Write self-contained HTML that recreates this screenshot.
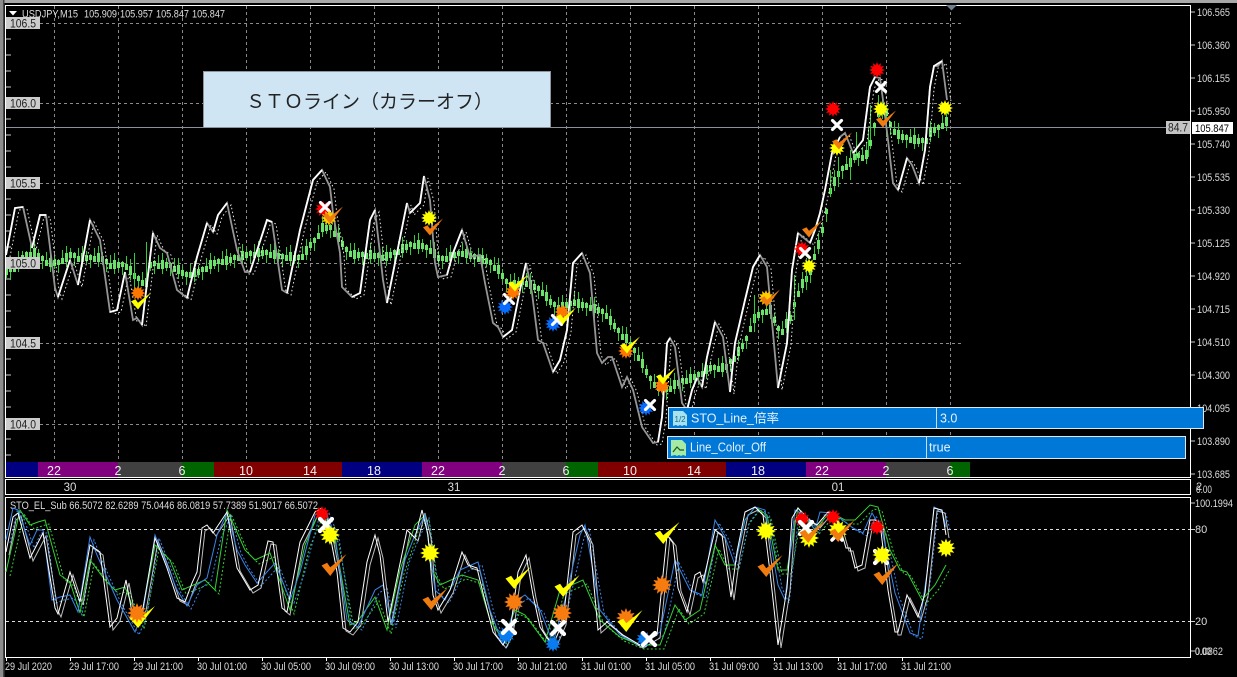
<!DOCTYPE html>
<html lang="ja">
<head>
<meta charset="utf-8">
<title>USDJPY,M15</title>
<style>
html,body{margin:0;padding:0;background:#000;width:1237px;height:677px;overflow:hidden}
svg{display:block}
text{font-family:"Liberation Sans","Noto Sans CJK JP",sans-serif;font-size:11px;fill:#dcdcdc}
.lb{fill:#222;font-size:11.5px}
.bar{fill:#f0f0f0;font-size:12.500px;text-anchor:middle}
.row{fill:#e6f1fa;font-size:12.500px}
marker{overflow:visible}
</style>
</head>
<body>
<svg width="1237" height="677" viewBox="0 0 1237 677" xmlns="http://www.w3.org/2000/svg">
<defs>
<marker id="k1" markerUnits="userSpaceOnUse" markerWidth="1" markerHeight="1" orient="0" overflow="visible"><path d="M.5 -7V6" stroke="#2fcf2f"/><rect x="-1" y="-3" width="3" height="6" fill="#6ce26c"/></marker>
<marker id="k2" markerUnits="userSpaceOnUse" markerWidth="1" markerHeight="1" orient="0" overflow="visible"><path d="M.5 -4V10" stroke="#2fcf2f"/><rect x="-1" y="-3" width="3" height="5" fill="#6ce26c"/></marker>
<marker id="k3" markerUnits="userSpaceOnUse" markerWidth="1" markerHeight="1" orient="0" overflow="visible"><path d="M.5 -10V4" stroke="#2fcf2f"/><rect x="-1" y="-2" width="3" height="6" fill="#6ce26c"/></marker>
<marker id="k4" markerUnits="userSpaceOnUse" markerWidth="1" markerHeight="1" orient="0" overflow="visible"><path d="M.5 -12V9" stroke="#2fcf2f"/><rect x="-1" y="-5" width="3" height="9" fill="#6ce26c"/></marker>
<polygon id="s" points="1,0 .6,.16 .866,.5 .438,.438 .5,.866 .16,.6 0,1 -.16,.6 -.5,.866 -.438,.438 -.866,.5 -.6,.16 -1,0 -.6,-.16 -.866,-.5 -.438,-.438 -.5,-.866 -.16,-.6 0,-1 .16,-.6 .5,-.866 .438,-.438 .866,-.5 .6,-.16"/>
<polygon id="c" points="-1,.05 -.55,-.2 -.3,.2 1,-1 -.3,1"/>
<path id="x" d="M-1 -1L1 1M-1 1L1 -1" fill="none" stroke="#fff" stroke-width=".7" stroke-linecap="round"/>
<polyline id="m" fill="none" points="6,255 15,208 23,207 32,248 40,215 46,215 55,288 58,297 70,260 78,285 90,220 100,240 110,312 117,310 125,272 133,320 137,318 142,325 153,233 160,248 167,253 177,290 187,298 197,257 207,223 213,232 218,215 227,203 237,250 245,272 250,272 267,220 272,222 282,290 287,293 300,230 313,180 322,170 330,187 333,213 340,253 342,287 352,297 360,293 370,220 375,210 383,280 387,303 397,253 407,203 410,213 420,203 424,176 430,200 435,263 438,277 447,275 453,253 462,230 465,240 470,257 480,255 485,283 493,323 498,327 503,337 512,330 520,290 526,263 532,293 538,340 543,343 553,372 560,360 567,330 573,263 582,253 590,273 597,353 602,363 608,357 612,357 622,387 627,377 633,390 642,427 653,443 658,442 662,417 667,343 670,338 675,347 682,403 687,410 692,390 697,378 702,387 707,357 715,322 723,337 730,392 735,343 745,300 753,267 760,255 767,267 773,333 778,388 787,343 792,270 798,233 810,243 815,230 820,213 825,190 832,153 840,137 845,133 853,153 863,140 870,87 875,77 880,78 883,100 888,140 893,183 898,190 907,158 912,165 919,183 925,150 930,87 934,66 938,66 942,61 947,100"/>
<polyline id="sw" fill="none" points="6,552 13,517 18,513 30,558 43,533 55,608 58,614 70,572 80,602 90,545 100,552 110,627 117,618 126,580 133,618 143,608 155,538 160,550 167,568 177,598 185,602 192,583 197,572 202,528 207,525 213,533 227,512 237,568 250,590 258,585 268,541 273,542 282,608 287,612 300,542 315,512 322,508 330,535 337,572 343,628 350,632 358,622 367,562 375,535 380,555 388,622 397,578 407,530 415,538 422,510 428,535 433,595 438,610 450,590 462,552 468,565 477,568 483,593 493,632 503,645 510,632 518,572 526,555 533,595 540,627 547,638 553,645 563,622 573,532 582,525 590,542 598,630 607,622 623,635 640,645 657,635 667,535 673,543 678,588 687,612 695,575 700,572 703,582 715,530 722,535 731,597 737,552 745,512 755,507 763,515 770,572 778,645 787,588 792,518 798,508 807,518 817,525 828,512 833,513 840,527 846,548 850,548 855,568 862,565 870,520 875,520 880,523 888,590 895,632 898,632 907,595 918,617 925,593 934,508 942,510 946,535"/>
<polyline id="sb" fill="none" points="6,540 13,508 18,510 30,545 37,530 43,530 52,600 60,597 70,595 78,612 90,537 97,555 117,600 135,632 143,612 155,535 165,560 177,590 187,606 197,585 207,578 217,535 227,513 237,550 245,565 257,583 275,563 290,600 300,572 315,515 325,510 335,535 347,620 358,627 375,590 383,585 392,625 405,560 415,535 425,515 435,590 445,600 460,570 478,562 490,610 503,645 517,600 525,595 540,610 553,643 565,600 580,535 585,525 600,610 620,635 640,645 660,632 675,560 690,590 702,595 715,520 725,537 735,565 745,520 755,507 765,510 778,585 785,600 795,510 805,515 815,530 820,512 833,513 853,528 863,533 872,513 882,530 895,593 910,633 918,636 927,573 934,507 942,511 946,527"/>
<polyline id="sg" fill="none" points="6,572 20,510 30,525 38,522 45,520 60,575 70,582 80,613 90,560 105,580 115,590 125,587 140,625 155,545 170,560 182,590 205,580 215,590 227,510 245,550 255,560 270,553 290,610 305,545 320,510 335,540 350,625 357,622 375,597 387,630 400,570 415,525 425,515 432,570 440,585 462,575 478,580 490,620 503,640 515,610 525,615 545,642 560,590 583,580 600,620 620,637 640,645 660,645 675,605 685,620 700,610 715,545 725,565 735,565 745,520 755,507 767,515 778,570 787,570 798,508 815,530 830,512 845,520 855,520 870,505 878,507 890,550 900,570 907,572 922,600 935,585 946,565"/>
</defs>

<rect width="1237" height="677" fill="#000"/>
<!-- outer window edges -->
<rect x="0" y="0" width="1237" height="3" fill="#a8a8a8"/>
<rect x="0" y="0" width="3" height="677" fill="#8c8c8c"/>
<rect x="3" y="0" width="1.5" height="677" fill="#444"/>

<!-- main grid -->
<g stroke="#8a8a8a" stroke-dasharray="3 3" fill="none">
<path d="M54.5 6V462M118.5 6V462M182.5 6V462M246.5 6V462M310.5 6V462M374.5 6V462M438.5 6V462M502.5 6V462M566.5 6V462M630.5 6V462M694.5 6V462M758.5 6V462M822.5 6V462M886.5 6V462M950.5 6V462"/>
<path d="M40 23.5H963M40 103.5H963M40 183.5H963M40 263.5H963M40 343.5H963M40 424.5H963"/>
</g>
<path d="M6 39h5M6 55h5M6 71h5M6 87h5M6 119h5M6 135h5M6 151h5M6 167h5M6 199h5M6 215h5M6 231h5M6 247h5M6 279h5M6 295h5M6 311h5M6 327h5M6 359h5M6 375h5M6 391h5M6 407h5M6 439h5M6 455h5M6 471h5" stroke="#ccc" fill="none"/>
<path d="M5 127.5H1190" stroke="#8a909c" stroke-width="1" fill="none"/>

<!-- candles -->
<g fill="none" stroke="none">
<polyline marker-start="url(#k1)" marker-mid="url(#k1)" marker-end="url(#k1)" points="6,272 22,258 38,256 54,263 70,255 86,258 102,259 118,265 134,276 150,265 166,265 182,273 198,272 214,263 230,260 246,255 262,253 278,256 294,258 310,245 326,228 342,244 358,255 374,256 390,255 406,247 422,246 438,258 454,255 470,256 486,261 502,276 518,284 534,287 550,302 566,305 582,305 598,310 614,326 630,345 646,372 662,389 678,383 694,377 710,368 726,367 742,346 758,315 774,320 790,318 806,279 822,230 838,174 854,157 870,143 886,113 902,137 918,141 934,130"/>
<polyline marker-start="url(#k2)" marker-mid="url(#k2)" marker-end="url(#k2)" points="10,270 26,255 42,259 58,263 74,256 90,258 106,262 122,265 138,279 154,264 170,266 186,275 202,270 218,262 234,258 250,254 266,253 282,257 298,258 314,241 330,228 346,250 362,255 378,256 394,253 410,245 426,248 442,259 458,254 474,257 490,263 506,282 522,283 538,289 554,305 570,304 586,306 602,312 618,331 634,351 650,379 666,390 682,381 698,375 714,368 730,362 746,339 762,313 778,329 794,305 810,273 826,212 842,169 858,156 874,126 890,125 906,138 922,141 938,128"/>
<polyline marker-start="url(#k3)" marker-mid="url(#k3)" marker-end="url(#k3)" points="14,268 30,254 46,262 62,260 78,258 94,258 110,265 126,266 142,282 158,265 174,268 190,274 206,268 222,261 238,257 254,254 270,254 286,257 302,256 318,235 334,233 350,253 366,255 382,257 398,251 414,245 430,250 446,258 462,253 478,258 494,267 510,284 526,283 542,292 558,307 574,302 590,307 606,315 622,336 638,357 654,384 670,388 686,380 702,373 718,368 734,358 750,328 766,311 782,331 798,293 814,256 830,190 846,166 862,157 878,113 894,131 910,139 926,140 942,125"/>
<polyline marker-start="url(#k4)" marker-mid="url(#k4)" marker-end="url(#k4)" points="18,263 34,253 50,263 66,258 82,258 98,258 114,265 130,271 146,283 162,265 178,270 194,273 210,265 226,261 242,256 258,253 274,255 290,257 306,251 322,228 338,238 354,255 370,255 386,257 402,249 418,245 434,254 450,257 466,254 482,260 498,270 514,285 530,285 546,297 562,307 578,304 594,309 610,321 626,339 642,364 658,387 674,385 690,379 706,370 722,368 738,352 754,319 770,310 786,324 802,284 818,245 834,182 850,163 866,155 882,110 898,135 914,140 930,133 946,122"/>
</g>
<path d="M134.500 253V290M146.500 242V285M830.500 170V197M838.500 157V187M850.500 150V180M856.500 132V160M868.500 127V157M870.500 105V140M878.500 95V118M886.500 117V137M794.500 275V320M806.500 258V290M754.500 295V332" stroke="#2fcf2f" fill="none"/>

<!-- STO line -->
<use href="#m" stroke="#e8e8e8" stroke-width="1" stroke-dasharray="1.500 2.500" transform="translate(4,2)"/>
<use href="#m" stroke="#959595" stroke-width="1.800"/>
<path fill="none" stroke="#fff" stroke-width="1.800" d="M6 255L15 208L23 207M32 248L40 215L46 215M58 297L70 260M78 285L90 220M110 312L117 310L125 272M142 325L153 233M187 298L197 257L207 223M213 232L218 215L227 203M250 272L267 220L272 222M287 293L300 230L313 180L322 170M352 297L360 293L370 220L375 210M387 303L397 253L407 203M410 213L420 203L424 176M447 275L453 253L462 230M503 337L512 330L520 290L526 263M553 372L560 360L567 330L573 263L582 253M658 442L662 417L667 343L670 338M687 410L692 390L697 378M702 387L707 357L715 322M730 392L735 343L745 300L753 267L760 255M778 388L787 343L792 270L798 233M810 243L815 230L820 213L825 190L832 153L840 137M853 153L863 140L870 87L875 77M898 190L907 158M919 183L925 150L930 87L934 66L942 61"/>

<!-- main markers -->
<g>
<use href="#s" fill="#f00" transform="translate(323,209) scale(8)"/>
<use href="#x" transform="translate(325,207) scale(4.5)"/>
<use href="#s" fill="#fc0" transform="translate(329,218) scale(8)"/>
<use href="#c" fill="#f07c10" transform="translate(333,215) scale(10,8.500)"/>
<use href="#s" fill="#f70" transform="translate(138,293) scale(7.500)"/>
<use href="#c" fill="#ff0" transform="translate(141,301) scale(10,8.500)"/>
<use href="#s" fill="#ff0" transform="translate(429,218) scale(8)"/>
<use href="#c" fill="#f07c10" transform="translate(433,227) scale(10,8.500)"/>
<use href="#s" fill="#0a6cff" transform="translate(505,307) scale(8)"/>
<use href="#x" transform="translate(509,299) scale(4.5)"/>
<use href="#s" fill="#f70" transform="translate(513,292) scale(8)"/>
<use href="#c" fill="#ff0" transform="translate(518,283) scale(10,8.500)"/>
<use href="#s" fill="#0a6cff" transform="translate(553,324) scale(8)"/>
<use href="#x" transform="translate(557,320) scale(4.5)"/>
<use href="#s" fill="#f70" transform="translate(562,312) scale(7.500)"/>
<use href="#c" fill="#ff0" transform="translate(566,316) scale(10,8.500)"/>
<use href="#s" fill="#f70" transform="translate(626,351) scale(8)"/>
<use href="#c" fill="#ff0" transform="translate(630,345) scale(10,8.500)"/>
<use href="#s" fill="#f70" transform="translate(662,386) scale(8)"/>
<use href="#c" fill="#ff0" transform="translate(666,376) scale(10,8.500)"/>
<use href="#s" fill="#0a6cff" transform="translate(646,408) scale(8)"/>
<use href="#x" transform="translate(650,405) scale(4.5)"/>
<use href="#s" fill="#fc0" transform="translate(766,298) scale(8)"/>
<use href="#c" fill="#f07c10" transform="translate(770,298) scale(10,8.500)"/>
<use href="#s" fill="#f00" transform="translate(802,249) scale(8)"/>
<use href="#x" transform="translate(805,253) scale(4.5)"/>
<use href="#s" fill="#ff0" transform="translate(809,266) scale(7.500)"/>
<use href="#c" fill="#f07c10" transform="translate(812,229) scale(10,8.500)"/>
<use href="#s" fill="#f00" transform="translate(833,109) scale(8)"/>
<use href="#x" transform="translate(837,125) scale(4.5)"/>
<use href="#s" fill="#ff0" transform="translate(837,148) scale(8)"/>
<use href="#c" fill="#f07c10" transform="translate(842,141) scale(10,8.500)"/>
<use href="#s" fill="#f00" transform="translate(877,70) scale(8)"/>
<use href="#x" transform="translate(881,87) scale(4.5)"/>
<use href="#s" fill="#ff0" transform="translate(881,109) scale(8)"/>
<use href="#c" fill="#f07c10" transform="translate(886,119) scale(10,8.500)"/>
<use href="#s" fill="#ff0" transform="translate(945,108) scale(8)"/>
</g>

<!-- label boxes left -->
<g fill="#ccc">
<rect x="6" y="17" width="34" height="12"/><rect x="6" y="97" width="34" height="12"/><rect x="6" y="177" width="34" height="12"/><rect x="6" y="257" width="34" height="12"/><rect x="6" y="337" width="34" height="12"/><rect x="6" y="418" width="34" height="12"/>
</g>
<text class="lb" x="10" y="27.500" textLength="26" lengthAdjust="spacingAndGlyphs">106.5</text>
<text class="lb" x="10" y="107.500" textLength="26" lengthAdjust="spacingAndGlyphs">106.0</text>
<text class="lb" x="10" y="187.500" textLength="26" lengthAdjust="spacingAndGlyphs">105.5</text>
<text class="lb" x="10" y="267.500" textLength="26" lengthAdjust="spacingAndGlyphs">105.0</text>
<text class="lb" x="10" y="347.500" textLength="26" lengthAdjust="spacingAndGlyphs">104.5</text>
<text class="lb" x="10" y="428.500" textLength="26" lengthAdjust="spacingAndGlyphs">104.0</text>

<!-- header -->
<polygon points="9,11 17,11 13,15.5" fill="#fff"/>
<g>
<text x="22" y="17.500" textLength="56" lengthAdjust="spacingAndGlyphs">USDJPY,M15</text>
<text x="84" y="17.500" textLength="33" lengthAdjust="spacingAndGlyphs">105.909</text>
<text x="120" y="17.500" textLength="33" lengthAdjust="spacingAndGlyphs">105.957</text>
<text x="156" y="17.500" textLength="33" lengthAdjust="spacingAndGlyphs">105.847</text>
<text x="192" y="17.500" textLength="33" lengthAdjust="spacingAndGlyphs">105.847</text>
</g>

<!-- title panel -->
<rect x="203.500" y="71.500" width="347" height="56" fill="#cfe5f4" stroke="#8f949c"/>
<text x="246" y="108" style="font-size:19px;fill:#222">&#xFF33;&#xFF34;&#xFF2F;ライン&#xFF08;カラーオフ&#xFF09;</text>

<!-- session bars -->
<g>
<rect x="6" y="462" width="32" height="15" fill="#000080"/>
<rect x="38" y="462" width="80" height="15" fill="#800080"/>
<rect x="118" y="462" width="64" height="15" fill="#404040"/>
<rect x="182" y="462" width="32" height="15" fill="#006400"/>
<rect x="214" y="462" width="128" height="15" fill="#800000"/>
<rect x="342" y="462" width="80" height="15" fill="#000080"/>
<rect x="422" y="462" width="80" height="15" fill="#800080"/>
<rect x="502" y="462" width="64" height="15" fill="#404040"/>
<rect x="566" y="462" width="32" height="15" fill="#006400"/>
<rect x="598" y="462" width="128" height="15" fill="#800000"/>
<rect x="726" y="462" width="80" height="15" fill="#000080"/>
<rect x="806" y="462" width="80" height="15" fill="#800080"/>
<rect x="886" y="462" width="64" height="15" fill="#404040"/>
<rect x="950" y="462" width="20" height="15" fill="#006400"/>
</g>
<text class="bar" x="54" y="475">22</text><text class="bar" x="118" y="475">2</text><text class="bar" x="182" y="475">6</text><text class="bar" x="246" y="475">10</text><text class="bar" x="310" y="475">14</text><text class="bar" x="374" y="475">18</text><text class="bar" x="438" y="475">22</text><text class="bar" x="502" y="475">2</text><text class="bar" x="566" y="475">6</text><text class="bar" x="630" y="475">10</text><text class="bar" x="694" y="475">14</text><text class="bar" x="758" y="475">18</text><text class="bar" x="822" y="475">22</text><text class="bar" x="886" y="475">2</text><text class="bar" x="950" y="475">6</text>

<!-- panel frames -->
<g fill="none" stroke="#fff">
<path d="M5.500 5.500H1190.500V477.500H5.500Z"/>
<path d="M5.500 479.500H1190.500V494.500H5.500Z"/>
<path d="M5.500 497.500H1190.500V657.500H5.500Z"/>
</g>
<polygon points="946,5 957,5 951.500,10.500" fill="#708090"/>
<text x="70" y="491" style="font-size:11.500px;text-anchor:middle">30</text>
<text x="454" y="491" style="font-size:11.500px;text-anchor:middle">31</text>
<text x="838" y="491" style="font-size:11.500px;text-anchor:middle">01</text>

<!-- right axis -->
<path d="M1191 12h4M1191 45h4M1191 78h4M1191 111h4M1191 144h4M1191 177h4M1191 210h4M1191 243h4M1191 276h4M1191 309h4M1191 342h4M1191 375h4M1191 408h4M1191 441h4M1191 474h4M1191 503h4M1191 529.500h4M1191 621.500h4M1191 651h4" stroke="#ccc" fill="none"/>
<g>
<text x="1197" y="16" textLength="33" lengthAdjust="spacingAndGlyphs">106.565</text>
<text x="1197" y="49" textLength="33" lengthAdjust="spacingAndGlyphs">106.360</text>
<text x="1197" y="82" textLength="33" lengthAdjust="spacingAndGlyphs">106.155</text>
<text x="1197" y="115" textLength="33" lengthAdjust="spacingAndGlyphs">105.950</text>
<text x="1197" y="148" textLength="33" lengthAdjust="spacingAndGlyphs">105.740</text>
<text x="1197" y="181" textLength="33" lengthAdjust="spacingAndGlyphs">105.535</text>
<text x="1197" y="214" textLength="33" lengthAdjust="spacingAndGlyphs">105.330</text>
<text x="1197" y="247" textLength="33" lengthAdjust="spacingAndGlyphs">105.125</text>
<text x="1197" y="280" textLength="33" lengthAdjust="spacingAndGlyphs">104.920</text>
<text x="1197" y="313" textLength="33" lengthAdjust="spacingAndGlyphs">104.715</text>
<text x="1197" y="346" textLength="33" lengthAdjust="spacingAndGlyphs">104.510</text>
<text x="1197" y="379" textLength="33" lengthAdjust="spacingAndGlyphs">104.300</text>
<text x="1197" y="412" textLength="33" lengthAdjust="spacingAndGlyphs">104.095</text>
<text x="1197" y="445" textLength="33" lengthAdjust="spacingAndGlyphs">103.890</text>
<text x="1197" y="478" textLength="33" lengthAdjust="spacingAndGlyphs">103.685</text>
<text x="1196" y="490">2</text>
<text x="1196" y="493" textLength="16" lengthAdjust="spacingAndGlyphs">0.00</text>
<text x="1195" y="507" textLength="38" lengthAdjust="spacingAndGlyphs">100.1994</text>
<text x="1195" y="533">80</text>
<text x="1195" y="625">20</text>
<text x="1195" y="655" textLength="28" lengthAdjust="spacingAndGlyphs">0.0862</text>
<text x="1195" y="655" textLength="16" lengthAdjust="spacingAndGlyphs">0.00</text>
</g>
<rect x="1166" y="121" width="24" height="13" fill="#c4c4c4"/>
<text class="lb" x="1168" y="131.500" textLength="20" lengthAdjust="spacingAndGlyphs">84.7</text>
<rect x="1192" y="122" width="41" height="12" fill="#fff"/>
<text class="lb" x="1195" y="132" style="font-size:11px;fill:#000" textLength="34" lengthAdjust="spacingAndGlyphs">105.847</text>

<!-- sub panel -->
<path d="M6 529.500H1190M6 621.500H1190" stroke="#ddd" stroke-dasharray="3 3" fill="none"/>
<text x="10" y="509" textLength="308" lengthAdjust="spacingAndGlyphs">STO_EL_Sub 66.5072 82.6289 75.0446 86.0819 57.7389 51.9017 66.5072</text>
<g fill="none" stroke-width="1">
<use href="#sg" stroke="#35d035" stroke-dasharray="2 2" transform="translate(4,4)"/>
<use href="#sb" stroke="#3a86e8" stroke-dasharray="2 2" transform="translate(4,3)"/>
<use href="#sw" stroke="#fff" stroke-opacity=".75" transform="translate(3,3)"/>
<use href="#sg" stroke="#35d035"/>
<use href="#sb" stroke="#3a86e8"/>
<use href="#sw" stroke="#fff"/>
</g>

<!-- sub markers -->
<g>
<use href="#c" fill="#ff0" transform="translate(142,617) scale(13,11)"/>
<use href="#s" fill="#f67c10" transform="translate(137,613) scale(10)"/>
<use href="#s" fill="#f00" transform="translate(322,514) scale(8)"/>
<use href="#x" transform="translate(326,525) scale(6)"/>
<use href="#s" fill="#ff0" transform="translate(330,535) scale(10)"/>
<use href="#c" fill="#f07c10" transform="translate(334,565) scale(12.500,11)"/>
<use href="#s" fill="#ff0" transform="translate(430,553) scale(10)"/>
<use href="#c" fill="#f07c10" transform="translate(435,599) scale(12.500,11)"/>
<use href="#c" fill="#ff0" transform="translate(518,578) scale(12.500,11)"/>
<use href="#s" fill="#f67c10" transform="translate(514,602) scale(10)"/>
<use href="#s" fill="#0a7cf0" transform="translate(506,635) scale(9)"/>
<use href="#x" transform="translate(509,627) scale(6)"/>
<use href="#c" fill="#ff0" transform="translate(567,586) scale(12.500,11)"/>
<use href="#s" fill="#f67c10" transform="translate(562,613) scale(10)"/>
<use href="#s" fill="#0a7cf0" transform="translate(553,644) scale(8)"/>
<use href="#x" transform="translate(558,628) scale(6)"/>
<use href="#s" fill="#f67c10" transform="translate(626,618) scale(10)"/>
<use href="#c" fill="#ff0" transform="translate(630,621) scale(12.500,11)"/>
<use href="#s" fill="#0a7cf0" transform="translate(644,639) scale(8)"/>
<use href="#x" transform="translate(649,639) scale(6)"/>
<use href="#s" fill="#f67c10" transform="translate(662,585) scale(10)"/>
<use href="#c" fill="#ff0" transform="translate(667,533) scale(12.500,11)"/>
<use href="#s" fill="#ff0" transform="translate(766,531) scale(10)"/>
<use href="#c" fill="#f07c10" transform="translate(770,566) scale(12.500,11)"/>
<use href="#s" fill="#f00" transform="translate(802,519) scale(8)"/>
<use href="#s" fill="#ff0" transform="translate(809,538) scale(10)"/>
<use href="#x" transform="translate(806,528) scale(6)"/>
<use href="#c" fill="#f07c10" transform="translate(812,532) scale(12.500,11)"/>
<use href="#x" transform="translate(837,535) scale(5)"/>
<use href="#s" fill="#ff0" transform="translate(838,530) scale(10)"/>
<use href="#s" fill="#f00" transform="translate(833,517) scale(8)"/>
<use href="#c" fill="#f07c10" transform="translate(842,531) scale(12.500,11)"/>
<use href="#s" fill="#f00" transform="translate(877,527) scale(8)"/>
<use href="#x" transform="translate(881,557) scale(6)"/>
<use href="#s" fill="#ff0" transform="translate(882,555) scale(9.500)"/>
<use href="#c" fill="#f07c10" transform="translate(886,574) scale(12.500,11)"/>
<use href="#s" fill="#ff0" transform="translate(946,548) scale(9.500)"/>
</g>

<!-- bottom axis -->
<path d="M6.500 657v4M70.500 657v4M134.500 657v4M198.500 657v4M262.500 657v4M326.500 657v4M390.500 657v4M454.500 657v4M518.500 657v4M582.500 657v4M646.500 657v4M710.500 657v4M774.500 657v4M838.500 657v4M902.500 657v4" stroke="#fff" fill="none"/>
<g>
<text x="5" y="670" textLength="47" lengthAdjust="spacingAndGlyphs">29 Jul 2020</text>
<text x="69" y="670" textLength="50" lengthAdjust="spacingAndGlyphs">29 Jul 17:00</text>
<text x="133" y="670" textLength="50" lengthAdjust="spacingAndGlyphs">29 Jul 21:00</text>
<text x="197" y="670" textLength="50" lengthAdjust="spacingAndGlyphs">30 Jul 01:00</text>
<text x="261" y="670" textLength="50" lengthAdjust="spacingAndGlyphs">30 Jul 05:00</text>
<text x="325" y="670" textLength="50" lengthAdjust="spacingAndGlyphs">30 Jul 09:00</text>
<text x="389" y="670" textLength="50" lengthAdjust="spacingAndGlyphs">30 Jul 13:00</text>
<text x="453" y="670" textLength="50" lengthAdjust="spacingAndGlyphs">30 Jul 17:00</text>
<text x="517" y="670" textLength="50" lengthAdjust="spacingAndGlyphs">30 Jul 21:00</text>
<text x="581" y="670" textLength="50" lengthAdjust="spacingAndGlyphs">31 Jul 01:00</text>
<text x="645" y="670" textLength="50" lengthAdjust="spacingAndGlyphs">31 Jul 05:00</text>
<text x="709" y="670" textLength="50" lengthAdjust="spacingAndGlyphs">31 Jul 09:00</text>
<text x="773" y="670" textLength="50" lengthAdjust="spacingAndGlyphs">31 Jul 13:00</text>
<text x="837" y="670" textLength="50" lengthAdjust="spacingAndGlyphs">31 Jul 17:00</text>
<text x="901" y="670" textLength="50" lengthAdjust="spacingAndGlyphs">31 Jul 21:00</text>
</g>

<!-- dialog rows -->
<rect x="668.500" y="407.500" width="535" height="21" fill="#0078d7" stroke="#dfe8f0"/>
<path d="M936.500 408V428" stroke="#c8dcee"/>
<path d="M673 411h10l4 4v11l-3-1-2 1-2-1-2 1-2-1-3 1Z" fill="#a8e2ef"/>
<text x="674.500" y="422" style="font-size:8px;fill:#1c6a8c">1/2</text>
<text class="row" x="691" y="422.500">STO_Line_倍率</text>
<text class="row" x="940" y="422.500">3.0</text>

<rect x="667.500" y="436.500" width="518" height="22" fill="#0078d7" stroke="#dfe8f0"/>
<path d="M926.500 437V458" stroke="#c8dcee"/>
<path d="M671 440h11l4 4v12l-3-1-2 1-2-1-2 1-2-1-4 1Z" fill="#a5eba5"/>
<path d="M673 452l4-5 3 3h4" stroke="#1a5a1a" stroke-width="1.200" fill="none"/>
<text class="row" x="690" y="451.500" textLength="76" lengthAdjust="spacingAndGlyphs">Line_Color_Off</text>
<text class="row" x="929" y="451.500">true</text>
</svg>
</body>
</html>
